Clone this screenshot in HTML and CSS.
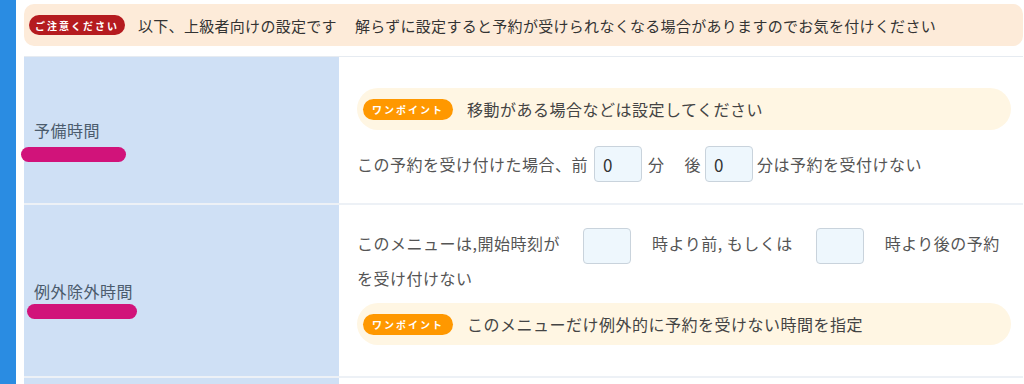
FILE: index.html
```html
<!DOCTYPE html>
<html lang="ja">
<head>
    <meta charset="UTF-8">
    <meta name="viewport" content="width=device-width, initial-scale=1.0">
    <title>メニュー詳細設定</title>
    <link rel="stylesheet" href="styles.css">
</head>
<body>
    <div class="page">
        <div class="side-bar"></div>
        <main class="content">
            <div class="notice">
                <span class="badge badge-caution">ご注意ください</span>
                <p class="notice-text">以下、上級者向けの設定です</p>
                <p class="notice-text notice-sub">解らずに設定すると予約が受けられなくなる場合がありますのでお気を付けください</p>
            </div>

            <div class="settings">
                <div class="row">
                    <div class="label">
                        予備時間
                        <span class="marker marker-buffer"></span>
                    </div>
                    <div class="field field-buffer">
                        <div class="one-point">
                            <span class="badge badge-point">ワンポイント</span>
                            <span class="one-point-text">移動がある場合などは設定してください</span>
                        </div>
                        <div class="input-line">
                            <span>この予約を受け付けた場合、前</span>
                            <input type="text" class="num-input num-before" value="0">
                            <span>分</span>
                            <span class="after-label">後</span>
                            <input type="text" class="num-input num-after" value="0">
                            <span>分は予約を受付けない</span>
                        </div>
                    </div>
                </div>

                <div class="row">
                    <div class="label">
                        例外除外時間
                        <span class="marker marker-except"></span>
                    </div>
                    <div class="field field-except">
                        <p class="input-text">このメニューは,開始時刻が<input type="text" class="num-input num-wide">時より前, もしくは<input type="text" class="num-input num-wide">時より後の予約を受け付けない</p>
                        <div class="one-point">
                            <span class="badge badge-point">ワンポイント</span>
                            <span class="one-point-text">このメニューだけ例外的に予約を受けない時間を指定</span>
                        </div>
                    </div>
                </div>

                <div class="row row-next">
                    <div class="label"></div>
                    <div class="field"></div>
                </div>
            </div>
        </main>
    </div>
</body>
</html>
```

FILE: styles.css
```css
body {
    margin: 0;
    height: 384px;
    overflow: hidden;
    background-color: #fff;
    font-family: "Noto Sans CJK JP", "Noto Sans", sans-serif;
    color: #333;
}

.page {
    display: flex;
    height: 384px;
}

.side-bar {
    width: 16px;
    flex-shrink: 0;
    background-color: #2a8ce2;
}

.content {
    width: 999px;
    margin-left: 8px;
    padding-top: 4px;
}

/* notice */
.notice {
    display: flex;
    align-items: center;
    height: 42px;
    padding: 0 5px;
    background-color: #fdebd9;
    border-radius: 10px;
}

.notice-text {
    margin: 0;
    font-size: 15px;
    letter-spacing: 0.3px;
    color: #333;
}

.notice-sub {
    margin-left: 18px;
}

.badge {
    display: inline-flex;
    align-items: center;
    justify-content: center;
    flex-shrink: 0;
    color: #fff;
    font-weight: bold;
}

.badge-caution {
    width: 96px;
    height: 20px;
    margin-right: 13px;
    border-radius: 10px;
    background-color: #b51b1f;
    font-size: 10px;
    letter-spacing: 2px;
}

.badge-point {
    width: 90px;
    height: 21px;
    margin: 0 14px 0 6px;
    border-radius: 11px;
    background-color: #ff9800;
    font-size: 10px;
    letter-spacing: 2px;
}

/* settings table */
.settings {
    margin-top: 10px;
    border-top: 1px solid #e6ebf1;
}

.row {
    display: grid;
    grid-template-columns: 315px 1fr;
    border-bottom: 2px solid #edf1f6;
}

.label {
    position: relative;
    display: flex;
    align-items: center;
    padding-left: 10px;
    background-color: #cfe0f5;
    font-size: 16px;
    letter-spacing: 0.5px;
    color: #4b5b6c;
}

.marker {
    position: absolute;
    height: 15px;
    border-radius: 8px;
    background-color: #d1137a;
}

.marker-buffer {
    left: -3px;
    top: 90px;
    width: 105px;
}

.marker-except {
    left: 3px;
    top: 99px;
    width: 110px;
}

.field {
    padding: 21px 12px 21px 18px;
    font-size: 16px;
    letter-spacing: 0.5px;
    color: #555;
}

.field-buffer {
    padding-bottom: 17px;
}

.one-point {
    display: flex;
    align-items: center;
    height: 42px;
    border-radius: 21px;
    background-color: #fff6e3;
}

.one-point-text {
    color: #444;
}

.field-buffer .one-point {
    margin: 10px 0 12px;
}

.field-except .one-point {
    margin: 7px 0 10px;
}

.input-line {
    display: flex;
    align-items: center;
    height: 44px;
}

.after-label {
    margin-left: 20px;
}

.num-input {
    box-sizing: border-box;
    width: 48px;
    height: 36px;
    padding: 0 8px;
    border: 1px solid #c9d3dc;
    border-radius: 4px;
    background-color: #eef7fd;
    font-family: inherit;
    font-size: 17px;
    color: #333;
}

.num-before {
    margin: 0 6px;
}

.num-after {
    margin: 0 4px;
}

.input-text {
    margin: 0;
    line-height: 35px;
}

.num-wide {
    margin: -4px 21px -4px 23px;
    vertical-align: middle;
}

.row-next .label,
.row-next .field {
    height: 6px;
    padding-top: 0;
    padding-bottom: 0;
}
```
